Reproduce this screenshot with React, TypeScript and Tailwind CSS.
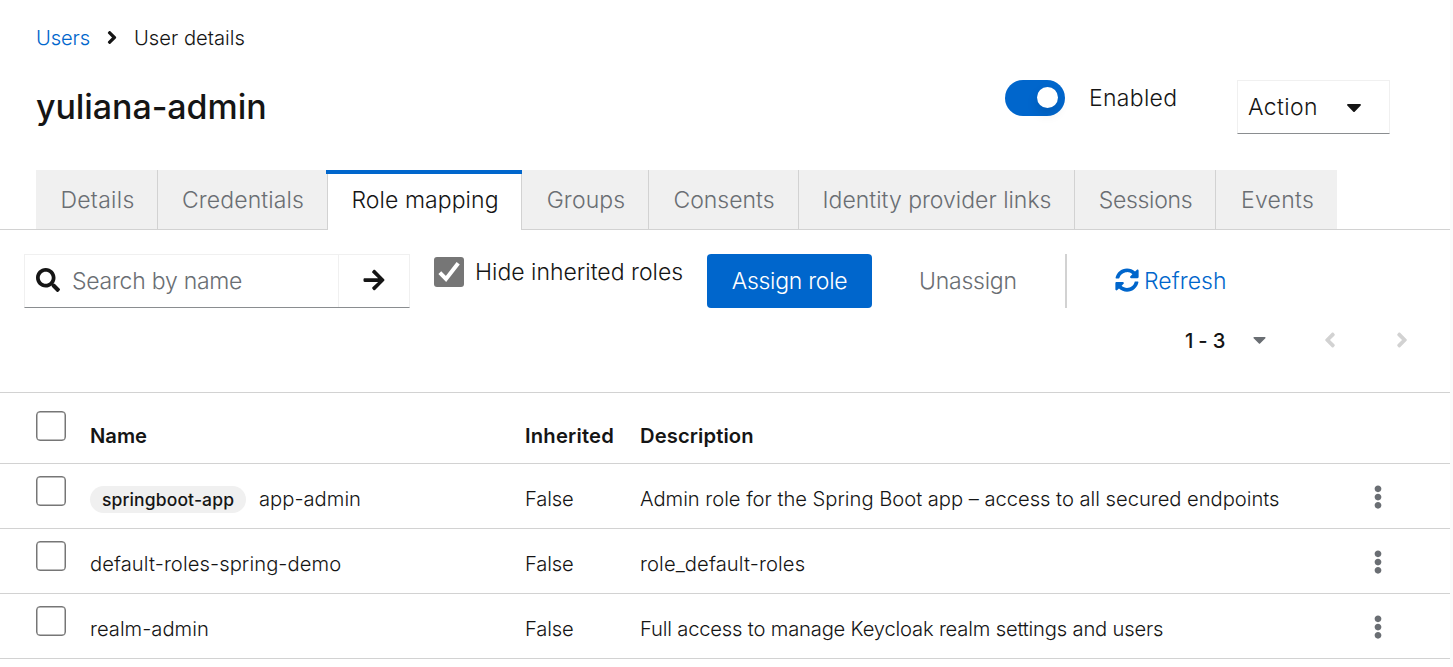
import React from "react";
import {
  FaAngleLeft,
  FaAngleRight,
  FaArrowRight,
  FaCaretDown,
  FaEllipsisV,
  FaSearch,
  FaSyncAlt,
} from "react-icons/fa";

type Tab = { label: string; className: string; active?: boolean };

const tabs: Tab[] = [
  { label: "Details", className: "w-[122px] border-r pl-[2px] tracking-[0.3px]" },
  { label: "Credentials", className: "w-[169px] pl-px tracking-[0.11px]" },
  { label: "Role mapping", className: "w-[195px] tracking-[0.08px]", active: true },
  { label: "Groups", className: "w-[127px] border-r pl-[2px] tracking-[0.14px]" },
  { label: "Consents", className: "w-[150px] border-r pl-px" },
  { label: "Identity provider links", className: "w-[276px] border-r pl-px" },
  { label: "Sessions", className: "w-[141px] border-r pl-px tracking-[-0.31px]" },
  { label: "Events", className: "w-[121px] pl-[2px] tracking-[0.3px]" },
];

type Role = {
  client?: string;
  name: string;
  nameClass: string;
  description: string;
  descriptionClass: string;
};

const roles: Role[] = [
  {
    client: "springboot-app",
    name: "app-admin",
    nameClass: "",
    description: "Admin role for the Spring Boot app – access to all secured endpoints",
    descriptionClass: "tracking-[-0.03px]",
  },
  {
    name: "default-roles-spring-demo",
    nameClass: "tracking-[0.07px]",
    description: "role_default-roles",
    descriptionClass: "tracking-[0.1px]",
  },
  {
    name: "realm-admin",
    nameClass: "",
    description: "Full access to manage Keycloak realm settings and users",
    descriptionClass: "tracking-[-0.19px]",
  },
];

function Checkbox({ checked = false }: { checked?: boolean }) {
  return (
    <span
      role="checkbox"
      aria-checked={checked}
      className={
        checked
          ? "block size-[30px] shrink-0 rounded-[3px] bg-[#767676]"
          : "block size-[30px] shrink-0 rounded-[4px] border-[1.5px] border-[#767676] bg-white shadow-[inset_0_0_0_0.5px_#767676]"
      }
    >
      {checked && (
        <svg viewBox="0 0 30 30" className="size-[30px]" fill="none" stroke="#fff" strokeWidth="4">
          <path d="M5.8 15.6 L12 22 L24.2 6.2" />
        </svg>
      )}
    </span>
  );
}

const columns = "grid grid-cols-[90px_435px_115px_1fr_72px] border-b border-[#d2d2d2]";

export default function App() {
  return (
    <div className="h-[667px] w-[1453px] overflow-hidden bg-[#fafafa] font-['Inter',sans-serif] text-[23px] leading-[32px] font-light text-[#151515]">
      <main className="h-full w-[1450px] bg-white">
        <nav className="flex h-[54px] items-center pt-[22px] pl-9 text-[20.2px]">
          <a className="w-[71px] tracking-[-0.15px] text-[#0066cc]">Users</a>
          <FaAngleRight className="-mt-px mr-[16px] -ml-px h-[21px] w-[12px]" />
          <span>User details</span>
        </nav>

        <header className="flex h-[116px] pl-9">
          <h1 className="w-[969px] pt-[33px] text-[34px] leading-[40px] font-medium tracking-[-0.07px]">
            yuliana-admin
          </h1>
          <div className="mt-[26px] flex h-9 w-[232px] items-center">
            <span className="flex h-9 w-[60px] items-center justify-end rounded-full bg-[#0066cc] pr-[7px]">
              <span className="-mt-px size-[21px] rounded-full bg-white shadow-[0_6px_12px_rgba(3,3,3,0.12)]" />
            </span>
            <span className="ml-6 tracking-[0.3px]">Enabled</span>
          </div>
          <button className="mt-[26px] flex h-[54px] w-[153px] items-center border border-[#f0f0f0] border-b-[#8a8d90] pl-[10px]">
            <span className="w-[94px] text-left tracking-[0.4px]">Action</span>
            <FaCaretDown className="size-6" />
          </button>
        </header>

        <div className="flex h-[60px] items-stretch">
          <div className="w-9 border-b border-[#d2d2d2]" />
          {tabs.map((tab) =>
            tab.active ? (
              <div key={tab.label} className={`flex ${tab.className}`}>
                <div className="-ml-px flex w-[196px] shrink-0 flex-col">
                  <div className="h-1 bg-[#0066cc]" />
                  <div className="ml-px flex flex-1 items-start justify-center border-x border-[#d2d2d2] pt-[10px] pl-px">
                    {tab.label}
                  </div>
                </div>
              </div>
            ) : (
              <div
                key={tab.label}
                className={`flex justify-center border-b border-[#d2d2d2] bg-[#f0f0f0] pt-[14px] whitespace-nowrap text-[#6a6e73] ${tab.className}`}
              >
                {tab.label}
              </div>
            ),
          )}
          <div className="flex-1 border-b border-[#d2d2d2]" />
        </div>

        <div className="flex h-[78px] items-start pt-6 pl-6">
          <div className="flex h-[54px] w-[386px] border border-[#f0f0f0] border-b-[#8a8d90]">
            <div className="flex w-[314px] items-center border-r border-[#f0f0f0] pl-[11px]">
              <FaSearch className="-mt-[2px] size-6" />
              <span className="ml-3 tracking-[-0.25px] text-[#6a6e73]">Search by name</span>
            </div>
            <div className="flex flex-1 items-center justify-center">
              <FaArrowRight className="-mt-[2px] size-6" />
            </div>
          </div>
          <div className="mt-[3px] ml-6 flex w-[273px]">
            <Checkbox checked />
            <span className="-mt-px ml-[11px] whitespace-nowrap">Hide inherited roles</span>
          </div>
          <button className="h-[54px] w-[165px] rounded-[4px] bg-[#0066cc] tracking-[-0.28px] text-white">
            Assign role
          </button>
          <span className="mt-[11px] ml-[47px] w-[146px] tracking-[-0.23px] text-[#6a6e73]">Unassign</span>
          <span className="h-[54px] w-[2px] bg-[#d2d2d2]" />
          <button className="ml-12 flex h-[54px] items-center text-[#0066cc]">
            <FaSyncAlt className="-mt-[2px] size-6" />
            <span className="ml-[5px] tracking-[0.05px]">Refresh</span>
          </button>
        </div>

        <div className="flex h-[85px] items-start border-b border-[#d2d2d2] pt-[17px] pl-[1185px]">
          <span className="w-[64px] text-[20.2px] font-medium tracking-[-0.2px]">1 - 3</span>
          <FaCaretDown className="mt-[4px] size-[21px] text-[#6a6e73]" />
          <FaAngleLeft className="mt-[3px] ml-[48px] size-6 text-[#d2d2d2]" />
          <FaAngleRight className="mt-[3px] ml-[48px] size-6 text-[#d2d2d2]" />
        </div>

        <section className="text-[20.2px]">
          <div className={`h-[71px] pt-[18px] font-semibold ${columns}`}>
            <div className="pl-9">
              <Checkbox />
            </div>
            <span className="pt-[9px]">Name</span>
            <span className="pt-[9px] tracking-[0.2px]">Inherited</span>
            <span className="pt-[9px] tracking-[0.1px]">Description</span>
          </div>
          {roles.map((role) => (
            <div key={role.name} className={`h-[65px] pt-[12px] ${columns}`}>
              <div className="pl-9">
                <Checkbox />
              </div>
              <div className="flex items-start pt-[7px]">
                {role.client && (
                  <span className="mt-[3px] mr-[13px] h-[27px] w-[156px] rounded-full bg-[#f0f0f0] text-center text-[17.5px] leading-[27px] font-medium tracking-[0.14px]">
                    {role.client}
                  </span>
                )}
                <span className={role.nameClass}>{role.name}</span>
              </div>
              <span className="pt-[7px] tracking-[-0.15px]">False</span>
              <span className={`pt-[7px] ${role.descriptionClass}`}>{role.description}</span>
              <FaEllipsisV className="mt-[9px] -ml-[12px] size-6 text-[#6a6e73]" />
            </div>
          ))}
        </section>
      </main>
    </div>
  );
}
